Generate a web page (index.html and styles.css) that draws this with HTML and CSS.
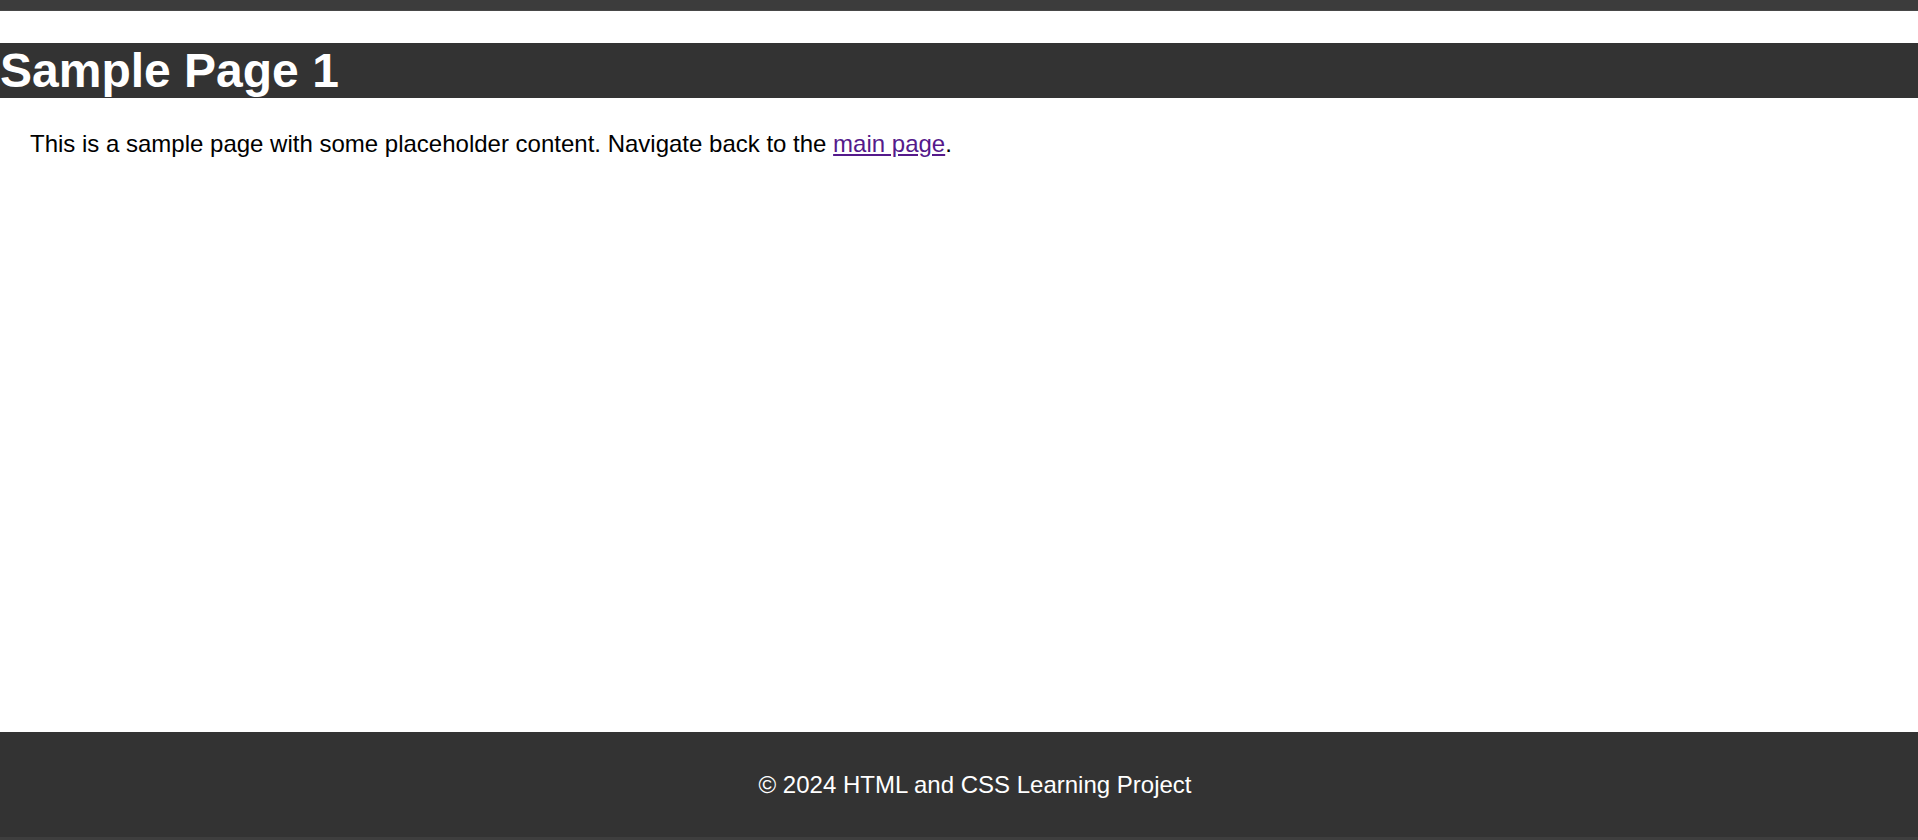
FILE: index.html
```html
<!DOCTYPE html>
<html lang="en">
<head>
<meta charset="utf-8">
<title>Sample Page 1</title>
<link rel="stylesheet" href="styles.css">
</head>
<body>
<div class="page">
  <div class="topbar"></div>
  <header class="header">
    <h1 class="title">Sample Page 1</h1>
  </header>
  <main class="content">
    <p class="text">This is a sample page with some placeholder content. Navigate back to the <a class="link" href="#">main page</a>.</p>
  </main>
  <footer class="footer">
    <p class="footer-text">&copy; 2024 HTML and CSS Learning Project</p>
  </footer>
  <div class="bottomline"></div>
</div>
</body>
</html>
```
FILE: styles.css
```css
html, body {
  margin: 0;
  padding: 0;
  height: 100%;
}
body {
  font-family: "Liberation Sans", Arial, sans-serif;
  font-size: 24px;
  color: #000;
  background: #fff;
}
.page {
  display: flex;
  flex-direction: column;
  height: 840px;
}
.topbar {
  height: 10px;
  background: #3c3c3c;
  border-bottom: 1px solid #484848;
  flex: none;
}
.header {
  flex: none;
}
.title {
  margin: 32px 0;
  padding: 0;
  font-size: 48px;
  font-weight: bold;
  line-height: 55px;
  color: #fff;
  background: #333;
}
.content {
  flex: 1;
  padding: 0 30px;
}
.text {
  margin: 0;
  line-height: 27.6px;
}
.link {
  color: #551a8b;
  text-decoration: underline;
}
.footer {
  flex: none;
  height: 105px;
  padding-left: 32px;
  background: #333;
  color: #fff;
  display: flex;
  align-items: center;
  justify-content: center;
}
.footer-text {
  margin: 0;
  line-height: 27.6px;
}
.bottomline {
  flex: none;
  height: 3px;
  background: #3e3e3e;
}
```
